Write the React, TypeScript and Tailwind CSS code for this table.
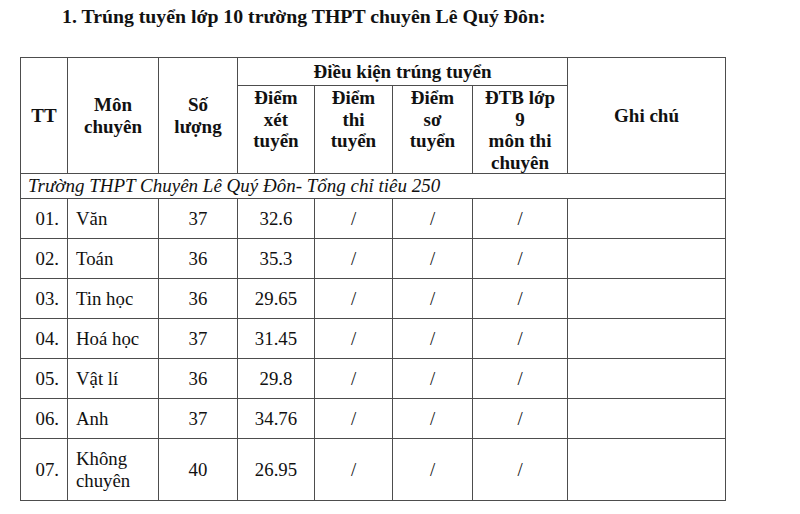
import React from "react";

const rows: [string, string, string, string][] = [
  ["01.", "Văn", "37", "32.6"],
  ["02.", "Toán", "36", "35.3"],
  ["03.", "Tin học", "36", "29.65"],
  ["04.", "Hoá học", "37", "31.45"],
  ["05.", "Vật lí", "36", "29.8"],
  ["06.", "Anh", "37", "34.76"],
];

const b = "border border-[#4d4d4d]";
const serif = { fontFamily: '"Liberation Serif", "Times New Roman", serif' };

export default function App() {
  return (
    <div className="w-[800px] h-[514px] bg-white text-[#111] overflow-hidden" style={serif}>
      <div className="pl-[62px] pt-[4px] h-[57px] text-[19.8px] font-bold leading-[24px]">
        1. Trúng tuyển lớp 10 trường THPT chuyên Lê Quý Đôn:
      </div>
      <table
        className="ml-[20px] w-[705px] table-fixed border-collapse text-[18.8px] text-[#111]"
        style={serif}
      >
        <colgroup>
          <col className="w-[47px]" />
          <col className="w-[91px]" />
          <col className="w-[79px]" />
          <col className="w-[77px]" />
          <col className="w-[78px]" />
          <col className="w-[80px]" />
          <col className="w-[95px]" />
          <col className="w-[158px]" />
        </colgroup>
        <thead className="font-bold leading-[21.5px] text-[19px]">
          <tr className="h-[28px]">
            <th rowSpan={2} className={`${b} font-bold`}>TT</th>
            <th rowSpan={2} className={`${b} font-bold`}>Môn<br />chuyên</th>
            <th rowSpan={2} className={`${b} font-bold`}>Số<br />lượng</th>
            <th colSpan={4} className={`${b} font-bold`}>Điều kiện trúng tuyển</th>
            <th rowSpan={2} className={`${b} font-bold`}>Ghi chú</th>
          </tr>
          <tr className="h-[88px]">
            <th className={`${b} font-bold align-top pt-[1px]`}>Điểm<br />xét<br />tuyển</th>
            <th className={`${b} font-bold align-top pt-[1px]`}>Điểm<br />thi<br />tuyển</th>
            <th className={`${b} font-bold align-top pt-[1px]`}>Điểm<br />sơ<br />tuyển</th>
            <th className={`${b} font-bold align-top pt-[1px]`}>ĐTB lớp<br />9<br />môn thi<br />chuyên</th>
          </tr>
        </thead>
        <tbody className="leading-[22px]">
          <tr className="h-[25px]">
            <td colSpan={8} className={`${b} italic pl-[7px] text-[19px] leading-[22px]`}>
              Trường THPT Chuyên Lê Quý Đôn- Tổng chỉ tiêu 250
            </td>
          </tr>
          {rows.map((r) => (
            <tr key={r[0]} className="h-[40px]">
              <td className={`${b} text-right pr-[8px]`}>{r[0]}</td>
              <td className={`${b} pl-[8px]`}>{r[1]}</td>
              <td className={`${b} text-center`}>{r[2]}</td>
              <td className={`${b} text-center`}>{r[3]}</td>
              <td className={`${b} text-center`}>/</td>
              <td className={`${b} text-center`}>/</td>
              <td className={`${b} text-center`}>/</td>
              <td className={b}></td>
            </tr>
          ))}
          <tr className="h-[62px]">
            <td className={`${b} text-right pr-[8px]`}>07.</td>
            <td className={`${b} pl-[8px]`}>Không<br />chuyên</td>
            <td className={`${b} text-center`}>40</td>
            <td className={`${b} text-center`}>26.95</td>
            <td className={`${b} text-center`}>/</td>
            <td className={`${b} text-center`}>/</td>
            <td className={`${b} text-center`}>/</td>
            <td className={b}></td>
          </tr>
        </tbody>
      </table>
    </div>
  );
}
